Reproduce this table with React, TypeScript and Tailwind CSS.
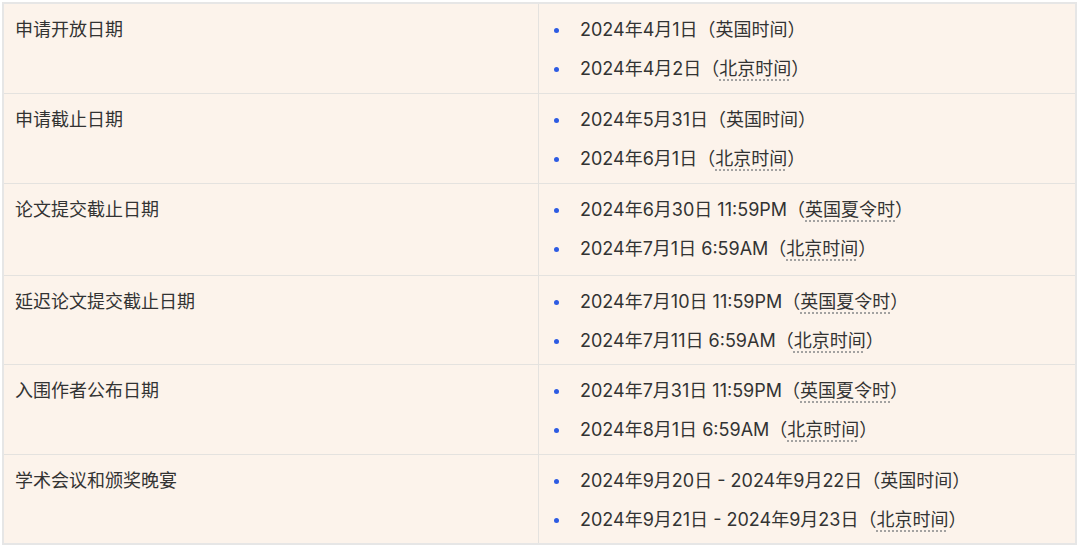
import React from 'react';

type Item = { main: string; zone: string; dotted: boolean };
type Row = { label: string; h: string; items: Item[] };

const UK = { zone: '英国时间', dotted: false };
const UKS = { zone: '英国夏令时', dotted: true };
const BJ = { zone: '北京时间', dotted: true };

const rows: Row[] = [
  { label: '申请开放日期', h: 'h-[89px]', items: [{ main: '2024年4月1日', ...UK }, { main: '2024年4月2日', ...BJ }] },
  { label: '申请截止日期', h: 'h-[90px]', items: [{ main: '2024年5月31日', ...UK }, { main: '2024年6月1日', ...BJ }] },
  { label: '论文提交截止日期', h: 'h-[92px]', items: [{ main: '2024年6月30日 11:59PM', ...UKS }, { main: '2024年7月1日 6:59AM', ...BJ }] },
  { label: '延迟论文提交截止日期', h: 'h-[89px]', items: [{ main: '2024年7月10日 11:59PM', ...UKS }, { main: '2024年7月11日 6:59AM', ...BJ }] },
  { label: '入围作者公布日期', h: 'h-[90px]', items: [{ main: '2024年7月31日 11:59PM', ...UKS }, { main: '2024年8月1日 6:59AM', ...BJ }] },
  { label: '学术会议和颁奖晚宴', h: 'h-[89px]', items: [{ main: '2024年9月20日 - 2024年9月22日', ...UK }, { main: '2024年9月21日 - 2024年9月23日', ...BJ }] },
];

export default function App() {
  return (
    <div
      className="w-[1080px] h-[550px] bg-white p-[2px] text-[#333333]"
      style={{ fontFamily: '"Inter", "Noto Sans CJK SC", sans-serif' }}
    >
      <div className="w-[1075px] border-2 border-[#e6e6e6] bg-[#fcf3eb]">
        {rows.map((row, i) => (
          <div
            key={row.label}
            className={`grid grid-cols-[535px_1fr] ${row.h} ${i > 0 ? 'border-t border-[#e4e2df]' : ''}`}
          >
            <div className="border-r border-[#e4e2df] pl-[11px] pt-[13px] text-[18px] leading-[26px]">
              {row.label}
            </div>
            <ul className="pl-[15px] pt-[13px] flex flex-col gap-[13px]">
              {row.items.map((it) => (
                <li key={it.main} className="flex items-center text-[18px] leading-[26px]">
                  <span className="w-[5px] h-[5px] rounded-full bg-[#2d5be3] mr-[21px] shrink-0" />
                  <span>{it.main}</span>
                  <span>（</span>
                  <span
                    className={
                      it.dotted
                        ? 'underline decoration-dotted decoration-[#9a9a9a] underline-offset-[5px]'
                        : ''
                    }
                  >
                    {it.zone}
                  </span>
                  <span>）</span>
                </li>
              ))}
            </ul>
          </div>
        ))}
      </div>
    </div>
  );
}
